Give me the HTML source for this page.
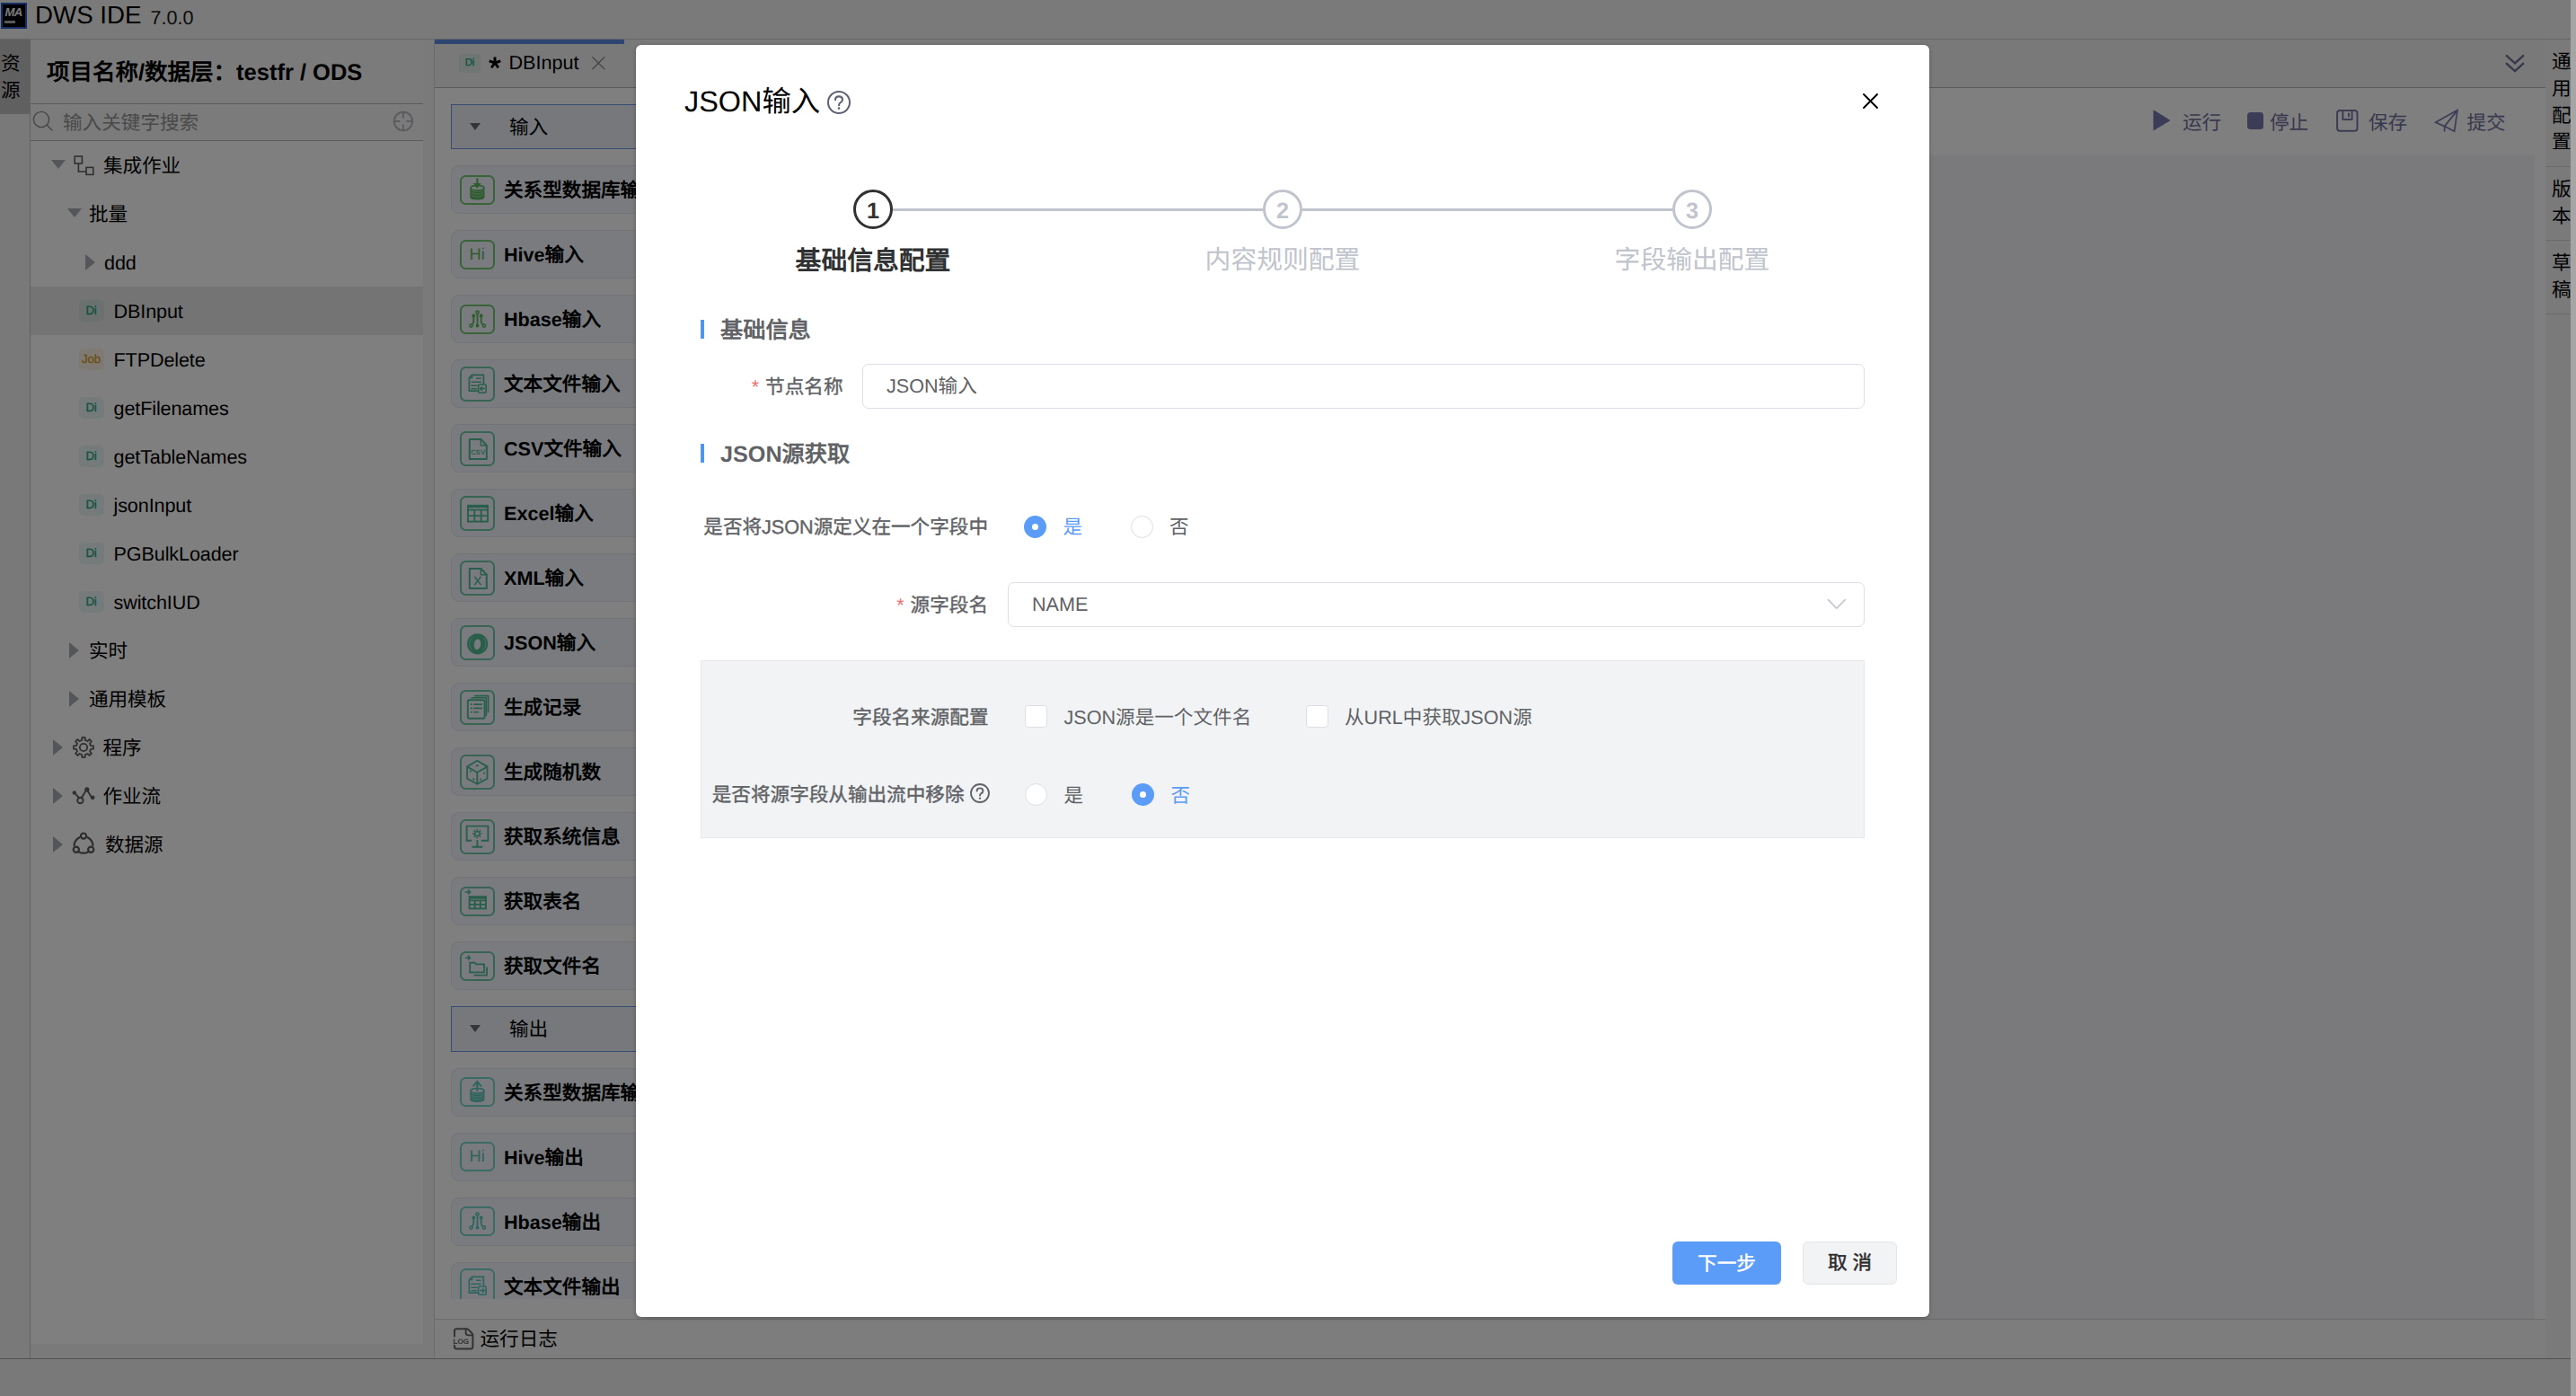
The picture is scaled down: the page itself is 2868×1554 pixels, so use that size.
<!DOCTYPE html>
<html lang="zh-CN">
<head>
<meta charset="utf-8">
<title>DWS IDE</title>
<style>
*{box-sizing:border-box;margin:0;padding:0}
html,body{width:2868px;height:1554px;overflow:hidden;background:#fff}
body{font-family:"Liberation Sans",sans-serif;font-size:21.6px;color:#000;position:relative;text-rendering:geometricPrecision}
svg{display:block;overflow:visible}
#app{position:absolute;left:0;top:0;width:2868px;height:1554px;background:#fff;overflow:hidden}
#hdr{position:absolute;left:0;top:0;width:2868px;height:44px;background:#f4f4f4;border-bottom:1.5px solid #cfcfcf}
#logo{position:absolute;left:1px;top:3px;width:29px;height:29px;background:#020206;border:2.5px solid #2c58c8;overflow:hidden}
#logo b{position:absolute;left:2.5px;top:2.2px;font-size:13.2px;line-height:13.2px;color:#f4f4f4;letter-spacing:-.8px;font-style:italic}
#logo i{position:absolute;left:1.5px;top:17.5px;width:12.5px;height:3px;background:#b0b0aa}
#hdr .t1{position:absolute;left:39px;top:0;font-size:27.7px;line-height:33px;white-space:nowrap}
#hdr .t2{position:absolute;left:167.5px;top:8px;font-size:21.6px;line-height:24px;color:#1a1a1a}
#lstrip{position:absolute;left:0;top:44px;width:34px;height:1469px;background:#f3f3f3}
#lstrip .act{position:absolute;left:0;top:0;width:34px;height:83px;background:#c1c1c1;font-size:21.6px;line-height:30px;text-align:left;padding:12.3px 0 0 1px}
#side{position:absolute;left:33px;top:44px;width:439px;height:1469px;background:#fff;border-left:1.5px solid #c4c4c4;border-right:1.5px solid #f4f4f4}
#side .hd{position:absolute;left:0;top:0;width:437px;height:113px;background:#f6f6f6}
#side .ttl{position:absolute;left:18px;top:0;height:72px;line-height:75px;font-size:25.5px;font-weight:bold;white-space:nowrap}
#side .srch{position:absolute;left:0;top:71px;width:437px;height:42px;border-top:1.5px solid #b6b6b6;border-bottom:1.5px solid #b6b6b6}
#side .srch .ph{position:absolute;left:36px;top:0;line-height:41px;color:#949494;font-size:21.6px}
#side .srch svg{position:absolute}
#side .foot{position:absolute;left:0;top:1452px;width:437px;height:17px;background:#f4f4f4}
.row{position:absolute;left:0;width:437px;height:54px;line-height:56px;white-space:nowrap;font-size:21.6px;letter-spacing:-.12px}
.row.sel{background:#e9e9e9}
.row .tx{position:absolute;top:0}
.row svg{position:absolute}
.bdg{position:absolute;width:28px;height:24px;border-radius:5px;font-size:13.3px;line-height:24px;text-align:center;letter-spacing:-.2px;-webkit-text-stroke:.3px currentColor}
.bdg.di{background:rgba(23,165,124,.085);color:#17a57c}
.bdg.job{background:rgba(222,150,20,.1);color:#d79a1e}
.car{position:absolute;width:0;height:0}
.car.d{border-left:8px solid transparent;border-right:8px solid transparent;border-top:10px solid #a9acb2}
.car.r{border-top:9px solid transparent;border-bottom:9px solid transparent;border-left:11px solid #a9acb2}
#gap{position:absolute;left:471px;top:44px;width:13px;height:1469px;background:#f4f4f4}
#main{position:absolute;left:483px;top:44px;width:2351px;height:1469px;background:#fff;border-left:1.5px solid #d6d6d6}
#tabs{position:absolute;left:0;top:0;width:2351px;height:54px;border-bottom:1.5px solid #b8b8b8;background:#f3f3f3}
#tab1{position:absolute;left:0;top:0;width:211px;height:53px;border-top:5px solid #5a8ce2;font-size:21.6px;line-height:42.5px;white-space:nowrap}
#tab1 .bdg{left:27px;top:11px;width:24px;height:20.5px;font-size:11.5px;line-height:20.5px;border-radius:4px}
#tab1 .tx{position:absolute;left:82.5px;top:0}
#tab1 .st{position:absolute;left:60px;top:13.6px}
#tab1 svg.x{position:absolute;left:175px;top:13.5px}
#chev{position:absolute;left:2303.5px;top:15px}
#pal{position:absolute;left:0;top:54px;width:236px;height:1348px;overflow:hidden;background:#fff}
.grp{position:absolute;left:18px;width:300px;height:50.4px;border:1.3px solid #6a98e6;background:#edf1f8;line-height:49.5px;font-size:21.6px}
.grp .car{left:20px;top:19.5px;border-left:6.5px solid transparent;border-right:6.5px solid transparent;border-top:8px solid #6b6b6b}
.grp span{position:absolute;left:64px}
.card{position:absolute;left:18px;width:300px;height:54px;border:1.5px solid #e3e8f0;border-radius:9px;background:#f2f6fc;font-weight:bold;font-size:21.6px;line-height:54px;white-space:nowrap}
.card .lb{position:absolute;left:58px;top:0}
.ic{position:absolute;left:8.5px;width:39.4px;border:2px solid;border-radius:6.5px}
.ic.s{top:9.8px;height:33px}
.ic.b{top:6.6px;height:39.4px}
.ic.g{border-color:#74c674;color:#5cb85c}
.ic.t{border-color:#70c8a9;color:#52bd95}
.ic.c{border-color:#78d5c9;color:#5cc8bb}
.ic svg{position:absolute;left:-2px;top:-2px}
.ic .hi{position:absolute;left:0;top:0;width:100%;height:100%;text-align:center;font-weight:normal;font-size:18.2px;line-height:29.5px}
#tool{position:absolute;left:236px;top:54px;width:2102px;height:74px;background:#fff}
#canvas{position:absolute;left:236px;top:128px;width:2102px;height:1296px;background:#f5f5f8}
#tool .b{position:absolute;top:0;line-height:77px;font-size:21.6px;color:#71719d;white-space:nowrap}
#tool svg{position:absolute}
#log{position:absolute;left:0;top:1424px;width:2351px;height:45px;border-top:1.5px solid #d6d6d6;background:#fafafa;line-height:44px;font-size:21.6px}
#log span{position:absolute;left:50.5px;top:0}
#log svg{position:absolute;left:19.5px;top:7.5px}
#rstrip{position:absolute;left:2834px;top:44px;width:28px;height:1469px;background:#f5f5f5;font-size:21.6px;line-height:29.65px}
#rstrip div{width:30px;padding:10.4px 0 11.5px 7px;border-bottom:1.5px solid #d6d6d6;word-break:break-all;overflow:hidden}
#status{position:absolute;left:0;top:1512.4px;width:2868px;height:42px;background:#f3f3f3;border-top:1.6px solid #a2a2a2}
#mask{position:absolute;left:0;top:0;width:2868px;height:1554px;background:rgba(0,0,0,.5)}
#redge{position:absolute;left:2862px;top:0;width:6px;height:1554px;background:#a5a5a5}
#modal{position:absolute;left:708px;top:50px;width:1440px;height:1416px;background:#fff;border-radius:6px;box-shadow:0 1px 4px rgba(0,0,0,.3);color:#606266;font-size:21.6px}
#modal .a{position:absolute;white-space:nowrap}
#modal svg{position:absolute}
.mt{left:54px;top:41px;font-size:32.4px;line-height:44px;color:#000}
.stp{position:absolute;top:161px;width:44px;height:44px;border-radius:50%;border:3.6px solid #c0c4cc;color:#c0c4cc;font-weight:bold;font-size:25.2px;line-height:42px;text-align:center;background:#fff}
.stp.on{border-color:#303133;color:#303133}
.sln{position:absolute;top:181.5px;height:3.6px;background:#c0c4cc}
.stt{position:absolute;top:220px;width:300px;text-align:center;font-size:28.8px;line-height:40px;color:#c0c4cc}
.stt.on{color:#303133;font-weight:bold;top:221px}
.sec{position:absolute;left:72px;height:21px;border-left:4px solid #4d97f3;}
.sec span{position:absolute;left:18px;top:-8px;line-height:40px;font-size:25.2px;font-weight:bold;color:#606266;white-space:nowrap}
.lab{position:absolute;text-align:right;white-space:nowrap;line-height:51px;color:#606266;font-size:21.6px;font-weight:500;-webkit-text-stroke:.4px #606266}
.lab i{font-style:normal;color:#f56c6c;margin-right:7px;-webkit-text-stroke:0}
.inp{position:absolute;height:50px;border:1.8px solid #dcdfe6;border-radius:7px;line-height:47px;padding-left:26px;color:#606266;background:#fff}
.rad{position:absolute;width:25px;height:25px;border-radius:50%;border:1.8px solid #dcdfe6;background:#fff}
.rad.on{border:none;background:#5a9cf8}
.rad.on:after{content:"";position:absolute;left:9px;top:9px;width:7px;height:7px;border-radius:50%;background:#fff}
.chk{position:absolute;width:25px;height:25px;border-radius:3.6px;border:1.8px solid #dcdfe6;background:#fff}
.opt{position:absolute;white-space:nowrap;line-height:31px;color:#606266;font-size:21.6px}
.opt.on{color:#5a9cf8}
.pan{position:absolute;left:72px;top:685px;width:1296px;height:198px;background:#f2f3f5;border:1.5px solid #e6e8ec}
.btn{position:absolute;top:1332px;height:48px;border-radius:6px;line-height:49px;text-align:center;font-size:21.6px;font-weight:500;-webkit-text-stroke:.5px currentColor}
.btn.p{left:1154px;width:121px;background:#5a9cf8;color:#fff}
.btn.d{left:1299px;width:105px;background:#f2f3f5;border:1.5px solid #e4e6ea;color:#2b2b2b;line-height:46px}
</style>
</head>
<body>
<div id="app">
<div id="hdr"><div id="logo"><b>MA</b><i></i></div><div class="t1">DWS IDE</div><div class="t2">7.0.0</div></div>
<div id="lstrip"><div class="act">资<br>源</div></div>
<div id="side">
<div class="hd"></div><div class="ttl">项目名称/数据层：testfr / ODS</div>
<div class="srch"><svg width="24" height="24" viewBox="0 0 24 24" fill="none" stroke="#8c8c8c" stroke-width="1.4" stroke-linecap="round" stroke-linejoin="round" style="left:2.4px;top:6.8px"><circle cx="10" cy="10" r="8.6"/><path d="M16.3 16.3l5.6 5.6"/></svg><div class="ph">输入关键字搜索</div><svg width="24" height="24" viewBox="0 0 24 24" fill="none" stroke="#b4b8be" stroke-width="1.9" stroke-linecap="round" stroke-linejoin="round" style="left:403px;top:7px"><circle cx="12" cy="12" r="10.2"/><path d="M12 1.8v6M12 16.2v6M1.8 12h6M16.2 12h6"/></svg></div>
<div class="row" style="top:113px"><i class="car d" style="left:22.5px;top:20.5px"></i><svg width="24" height="24" viewBox="0 0 24 24" fill="none" stroke="#5f5f5f" stroke-width="1.6" stroke-linecap="round" stroke-linejoin="round" style="left:47.5px;top:15.599999999999994px"><rect x="1.2" y="1" width="8.2" height="8" stroke-linejoin="miter"/><rect x="14" y="13.4" width="7.8" height="8" stroke-linejoin="miter"/><path d="M5.4 9v9h8.6" stroke-linejoin="miter" stroke-linecap="butt"/></svg><span class="tx" style="left:81.0px">集成作业</span></div>
<div class="row" style="top:167px"><i class="car d" style="left:40.5px;top:20.5px"></i><span class="tx" style="left:65.0px">批量</span></div>
<div class="row" style="top:221px"><i class="car r" style="left:61.0px;top:18px"></i><span class="tx" style="left:82.0px">ddd</span></div>
<div class="row sel" style="top:275px"><span class="bdg di" style="left:53.5px;top:14.8px">Di</span><span class="tx" style="left:92.5px">DBInput</span></div>
<div class="row" style="top:329px"><span class="bdg job" style="left:53.5px;top:14.8px">Job</span><span class="tx" style="left:92.5px">FTPDelete</span></div>
<div class="row" style="top:383px"><span class="bdg di" style="left:53.5px;top:14.8px">Di</span><span class="tx" style="left:92.5px">getFilenames</span></div>
<div class="row" style="top:437px"><span class="bdg di" style="left:53.5px;top:14.8px">Di</span><span class="tx" style="left:92.5px">getTableNames</span></div>
<div class="row" style="top:491px"><span class="bdg di" style="left:53.5px;top:14.8px">Di</span><span class="tx" style="left:92.5px">jsonInput</span></div>
<div class="row" style="top:545px"><span class="bdg di" style="left:53.5px;top:14.8px">Di</span><span class="tx" style="left:92.5px">PGBulkLoader</span></div>
<div class="row" style="top:599px"><span class="bdg di" style="left:53.5px;top:14.8px">Di</span><span class="tx" style="left:92.5px">switchIUD</span></div>
<div class="row" style="top:653px"><i class="car r" style="left:43.0px;top:18px"></i><span class="tx" style="left:65.0px">实时</span></div>
<div class="row" style="top:707px"><i class="car r" style="left:43.0px;top:18px"></i><span class="tx" style="left:65.0px">通用模板</span></div>
<div class="row" style="top:761px"><i class="car r" style="left:25.0px;top:18px"></i><svg width="26" height="26" viewBox="0 0 26 26" fill="none" stroke="#5f5f5f" stroke-width="1.8" stroke-linecap="round" stroke-linejoin="round" style="left:45.5px;top:13.5px"><circle cx="13" cy="13" r="4.2"/><path d="M21.10 11.19L24.09 11.42L24.09 14.58L21.10 14.81L20.01 17.45L21.96 19.72L19.72 21.96L17.45 20.01L14.81 21.10L14.58 24.09L11.42 24.09L11.19 21.10L8.55 20.01L6.28 21.96L4.04 19.72L5.99 17.45L4.90 14.81L1.91 14.58L1.91 11.42L4.90 11.19L5.99 8.55L4.04 6.28L6.28 4.04L8.55 5.99L11.19 4.90L11.42 1.91L14.58 1.91L14.81 4.90L17.45 5.99L19.72 4.04L21.96 6.28L20.01 8.55Z"/></svg><span class="tx" style="left:80.5px">程序</span></div>
<div class="row" style="top:815px"><i class="car r" style="left:25.0px;top:18px"></i><svg width="26" height="20" viewBox="0 0 26 20" fill="none" stroke="#5f5f5f" stroke-width="1.9" stroke-linecap="round" stroke-linejoin="round" style="left:45.5px;top:17px"><path d="M3 6.4l5 6M10.6 12.6L16 3.6M17.6 4.6l5 8.2" stroke-width="1.9"/><circle cx="2.8" cy="6.4" r="2.2" fill="#5f5f5f" stroke="none"/><circle cx="9.4" cy="15" r="3.2" stroke-width="1.9"/><circle cx="16.8" cy="2.8" r="2.6" fill="#5f5f5f" stroke="none"/><circle cx="23.2" cy="11.8" r="2.3" fill="#5f5f5f" stroke="none"/></svg><span class="tx" style="left:80.5px">作业流</span></div>
<div class="row" style="top:869px"><i class="car r" style="left:25.0px;top:18px"></i><svg width="26" height="26" viewBox="0 0 26 26" fill="none" stroke="#5a5a5a" stroke-width="2.2" stroke-linecap="round" stroke-linejoin="round" style="left:45.900000000000006px;top:13px"><path d="M8.4 6.2A10.6 10.6 0 0 0 2.6 15M17.6 6.2A10.6 10.6 0 0 1 23.4 15M8 22.4a10.8 10.8 0 0 0 10 0" /><circle cx="13" cy="4.6" r="3.1"/><circle cx="4.8" cy="19.8" r="3.1"/><circle cx="21.2" cy="19.8" r="3.1"/></svg><span class="tx" style="left:83.0px">数据源</span></div>
<div class="foot"></div>
</div>
<div id="gap"></div>
<div id="main">
<div id="tabs"><div id="tab1"><span class="bdg di">Di</span><svg class="st" width="14" height="14" viewBox="0 0 14 14" stroke="#000" stroke-width="2.9" stroke-linecap="butt"><path d="M7 7V0.4M7 7L0.7 4.95M7 7l6.3-2.05M7 7l-3.9 5.35M7 7l3.9 5.35"/></svg><span class="tx">DBInput</span><svg class="x" width="15" height="15" viewBox="0 0 15 15" fill="none" stroke="#8c8c8c" stroke-width="1.3" stroke-linecap="round" stroke-linejoin="round" style=""><path d="M.8 .8l13 13M13.8 .8L.8 13.8"/></svg></div><div id="chev"><svg width="24" height="24" viewBox="0 0 24 24" fill="none" stroke="#6f6f96" stroke-width="2.3" stroke-linecap="round" stroke-linejoin="round" style=""><path d="M2 2.4l10 9 10-9M2 11.2l10 9 10-9" stroke-linejoin="miter" stroke-linecap="butt"/></svg></div></div>
<div id="pal">
<div class="grp" style="top:18px"><i class="car"></i><span>输入</span></div>
<div class="card" style="top:86px"><div class="ic s g"><svg width="39" height="33" viewBox="0 0 39 33" fill="none" stroke="currentColor" stroke-width="1.8" stroke-linecap="round" stroke-linejoin="round" ><path d="M11.95 14.3V24.3a7.45 2.7 0 0 0 14.9 0V14.3a7.45 2.7 0 0 1 -14.9 0z" fill="currentColor" stroke="currentColor" stroke-width="1.2"/><ellipse cx="19.4" cy="14.3" rx="7.45" ry="2.7" stroke-width="1.5" fill="none"/><path d="M13.149999999999999 16.00a6.25 2.2 0 0 0 12.5 0" stroke="#dfe9e3" stroke-width="1" opacity=".62" fill="none"/><path d="M13.149999999999999 18.93a6.25 2.2 0 0 0 12.5 0" stroke="#dfe9e3" stroke-width="1" opacity=".62" fill="none"/><path d="M13.149999999999999 21.87a6.25 2.2 0 0 0 12.5 0" stroke="#dfe9e3" stroke-width="1" opacity=".62" fill="none"/><path d="M19.4 4.2v6" stroke-width="1.9"/><path d="M15.9 9.4h7l-3.5 4.6z" fill="currentColor" stroke-width="1"/></svg></div><span class="lb">关系型数据库输入</span></div>
<div class="card" style="top:158px"><div class="ic s g"><div class="hi">Hi</div></div><span class="lb">Hive输入</span></div>
<div class="card" style="top:230px"><div class="ic s g"><svg width="39" height="33" viewBox="0 0 39 33" fill="none" stroke="currentColor" stroke-width="1.8" stroke-linecap="round" stroke-linejoin="round" ><circle cx="19.5" cy="8.6" r="1.7" stroke-width="1.5"/><path d="M19.5 10.4v12" stroke-width="1.8"/><circle cx="19.5" cy="23.6" r="1.9" fill="currentColor" stroke="none"/><circle cx="15.3" cy="12.5" r="1.9" fill="currentColor" stroke="none"/><path d="M15.3 13.5v5.6q0 1.3-.9 2.1l-.9 .9" stroke-width="1.8"/><circle cx="12.5" cy="23.6" r="1.6" stroke-width="1.5"/><circle cx="23.7" cy="12.5" r="1.9" fill="currentColor" stroke="none"/><path d="M23.7 13.5v5.6q0 1.3.9 2.1l.9 .9" stroke-width="1.8"/><circle cx="26.9" cy="23.6" r="1.6" stroke-width="1.5"/></svg></div><span class="lb">Hbase输入</span></div>
<div class="card" style="top:302px"><div class="ic b t"><svg width="39" height="39" viewBox="0 0 39 39" fill="none" stroke="currentColor" stroke-width="1.8" stroke-linecap="round" stroke-linejoin="round" ><path d="M20.5 27.2H10.4V12.6l3.2-3.2h12.8v10.2" stroke-width="1.7"/><path d="M10.6 12.7h3.1V9.6" stroke-width="1.3"/><path d="M18.6 13.3h4.6M13 17.3h10.4M13 21.2h6M13 24.8h5.4" stroke-width="1.5"/><rect x="20.6" y="20" width="8.6" height="9.2" rx="1.4" stroke-width="1.6"/><path d="M27.3 24.6h-4.4M24.6 22.7l-1.9 1.9 1.9 1.9" stroke-width="1.5"/></svg></div><span class="lb">文本文件输入</span></div>
<div class="card" style="top:374px"><div class="ic b t"><svg width="39" height="39" viewBox="0 0 39 39" fill="none" stroke="currentColor" stroke-width="1.8" stroke-linecap="round" stroke-linejoin="round" ><path d="M10.8 9h12.6l6.4 6.6V31H10.8z" stroke-width="2"/><path d="M23.2 9.2v6.6h6.4" stroke-width="1.4"/><text x="20.3" y="25.6" font-family="Liberation Sans, sans-serif" font-size="7.6" text-anchor="middle" fill="currentColor" stroke="none" letter-spacing=".2">CSV</text></svg></div><span class="lb">CSV文件输入</span></div>
<div class="card" style="top:446px"><div class="ic b t"><svg width="39" height="39" viewBox="0 0 39 39" fill="none" stroke="currentColor" stroke-width="1.8" stroke-linecap="round" stroke-linejoin="round" ><rect x="9" y="10.8" width="22" height="17.8" stroke-width="1.9" stroke-linejoin="miter"/><path d="M9 15.600000000000001H31M9 22.10H31M16.33 15.600000000000001V28.6M23.67 15.600000000000001V28.6" stroke-width="1.9" stroke-linecap="butt"/><path d="M9 12.0H31" stroke-width="2.6" stroke-linecap="butt"/></svg></div><span class="lb">Excel输入</span></div>
<div class="card" style="top:518px"><div class="ic b t"><svg width="39" height="39" viewBox="0 0 39 39" fill="none" stroke="currentColor" stroke-width="1.8" stroke-linecap="round" stroke-linejoin="round" ><path d="M10.8 9h12.6l6.4 6.6V31H10.8z" stroke-width="2"/><path d="M23.2 9.2v6.6h6.4" stroke-width="1.4"/><path d="M16.6 18.2l6.6 8.6M23.2 18.2l-6.6 8.6" stroke-width="1.4"/></svg></div><span class="lb">XML输入</span></div>
<div class="card" style="top:590px"><div class="ic b t"><svg width="39" height="39" viewBox="0 0 39 39" fill="none" stroke="currentColor" stroke-width="1.8" stroke-linecap="round" stroke-linejoin="round" ><circle cx="19.6" cy="20.8" r="11.6" fill="currentColor" stroke="none"/><ellipse cx="19.5" cy="21.3" rx="3.7" ry="5.9" transform="rotate(8 19.5 21.3)" fill="#f2f6fc" stroke="none"/><path d="M12.6 26.5a9.6 9.6 0 0 1 1.2-13.2" stroke="#e6ecf3" stroke-width=".9" opacity=".55"/><path d="M27 14.4a9.6 9.6 0 0 1-1.2 13.3" stroke="#e6ecf3" stroke-width=".9" opacity=".55"/></svg></div><span class="lb">JSON输入</span></div>
<div class="card" style="top:662px"><div class="ic b t"><svg width="39" height="39" viewBox="0 0 39 39" fill="none" stroke="currentColor" stroke-width="1.8" stroke-linecap="round" stroke-linejoin="round" ><rect x="8.8" y="11.2" width="18.8" height="20.6" rx="1.8" stroke-width="1.9"/><path d="M13 8.8h16.4v19.6M16.6 6.6h15v18.2" stroke-width="1.6"/><path d="M15.8 16.1h8.6M15.8 20.4h8.6M15.8 24.7h4.6" stroke-width="1.6"/><path d="M12.4 16.1h.8M12.4 20.4h.8M12.4 24.7h.8" stroke-width="1.6"/></svg></div><span class="lb">生成记录</span></div>
<div class="card" style="top:734px"><div class="ic b t"><svg width="39" height="39" viewBox="0 0 39 39" fill="none" stroke="currentColor" stroke-width="1.8" stroke-linecap="round" stroke-linejoin="round" ><path d="M19.3 6.8l11.2 6.6v13.4l-11.2 6-11.2-6V13.4z" stroke-width="1.8"/><path d="M8.3 13.6l11 6.2 11-6.2M19.3 19.8v12.8" stroke-width="1.8"/><ellipse cx="19.3" cy="12.3" rx="1.7" ry="1.1" fill="currentColor" stroke="none"/><circle cx="11.9" cy="18.6" r="1.1" fill="currentColor" stroke="none"/><circle cx="15.3" cy="27.4" r="1.1" fill="currentColor" stroke="none"/><circle cx="27" cy="20.6" r="1.1" fill="currentColor" stroke="none"/><circle cx="23.2" cy="27.6" r="1.1" fill="currentColor" stroke="none"/></svg></div><span class="lb">生成随机数</span></div>
<div class="card" style="top:806px"><div class="ic b t"><svg width="39" height="39" viewBox="0 0 39 39" fill="none" stroke="currentColor" stroke-width="1.8" stroke-linecap="round" stroke-linejoin="round" ><path d="M13.2 23.8H7.6V7.6h23.8v16.2h-7.6" stroke-width="1.9" stroke-linejoin="miter" stroke-linecap="butt"/><path d="M19.4 23v7.8M13.6 30.8h11.6" stroke-width="1.9" stroke-linecap="butt"/><circle cx="19.3" cy="16" r="2.6" stroke-width="1.5"/><path d="M22.70 16.00L24.60 16.00M21.70 18.40L23.05 19.75M19.30 19.40L19.30 21.30M16.90 18.40L15.55 19.75M15.90 16.00L14.00 16.00M16.90 13.60L15.55 12.25M19.30 12.60L19.30 10.70M21.70 13.60L23.05 12.25" stroke-width="1.5" stroke-linecap="butt"/></svg></div><span class="lb">获取系统信息</span></div>
<div class="card" style="top:878px"><div class="ic s t"><svg width="39" height="33" viewBox="0 0 39 33" fill="none" stroke="currentColor" stroke-width="1.8" stroke-linecap="round" stroke-linejoin="round" ><rect x="10.6" y="11.2" width="18.4" height="13.2" stroke-width="1.9" stroke-linejoin="miter"/><path d="M10.6 15.399999999999999H29M10.6 19.90H29M16.73 15.399999999999999V24.4M22.87 15.399999999999999V24.4" stroke-width="1.9" stroke-linecap="butt"/><path d="M10.6 12.399999999999999H29" stroke-width="2.6" stroke-linecap="butt"/><path d="M6.4 6h5M9.4 3.9l2.2 2.1-2.2 2.1" stroke-width="1.5"/></svg></div><span class="lb">获取表名</span></div>
<div class="card" style="top:950px"><div class="ic s t"><svg width="39" height="33" viewBox="0 0 39 33" fill="none" stroke="currentColor" stroke-width="1.8" stroke-linecap="round" stroke-linejoin="round" ><path d="M6.4 7.2h5M9.4 5.1l2.2 2.1-2.2 2.1" stroke-width="1.5"/><path d="M11.2 23.4V12.6h5.4l1.4 1.7h9v9.1z" stroke-width="1.8" stroke-linejoin="miter"/><path d="M30 17.4v9.2H15.4" stroke-width="1.8" stroke-linejoin="miter" stroke-linecap="butt"/></svg></div><span class="lb">获取文件名</span></div>
<div class="grp" style="top:1022.3px"><i class="car"></i><span>输出</span></div>
<div class="card" style="top:1090.6px"><div class="ic s c"><svg width="39" height="33" viewBox="0 0 39 33" fill="none" stroke="currentColor" stroke-width="1.8" stroke-linecap="round" stroke-linejoin="round" ><path d="M11.95 15.3V24.7a7.45 2.7 0 0 0 14.9 0V15.3a7.45 2.7 0 0 1 -14.9 0z" fill="currentColor" stroke="currentColor" stroke-width="1.2"/><ellipse cx="19.4" cy="15.3" rx="7.45" ry="2.7" stroke-width="1.5" fill="none"/><path d="M13.149999999999999 17.00a6.25 2.2 0 0 0 12.5 0" stroke="#dfe9e3" stroke-width="1" opacity=".62" fill="none"/><path d="M13.149999999999999 19.73a6.25 2.2 0 0 0 12.5 0" stroke="#dfe9e3" stroke-width="1" opacity=".62" fill="none"/><path d="M13.149999999999999 22.47a6.25 2.2 0 0 0 12.5 0" stroke="#dfe9e3" stroke-width="1" opacity=".62" fill="none"/><path d="M19.3 15V6" stroke-width="2.1"/><path d="M15.3 9.6l4-4.6 4 4.6" stroke-width="2.1" stroke-linejoin="miter"/></svg></div><span class="lb">关系型数据库输出</span></div>
<div class="card" style="top:1162.6px"><div class="ic s c"><div class="hi">Hi</div></div><span class="lb">Hive输出</span></div>
<div class="card" style="top:1234.6px"><div class="ic s c"><svg width="39" height="33" viewBox="0 0 39 33" fill="none" stroke="currentColor" stroke-width="1.8" stroke-linecap="round" stroke-linejoin="round" ><circle cx="19.5" cy="8.6" r="1.7" stroke-width="1.5"/><path d="M19.5 10.4v12" stroke-width="1.8"/><circle cx="19.5" cy="23.6" r="1.9" fill="currentColor" stroke="none"/><circle cx="15.3" cy="12.5" r="1.9" fill="currentColor" stroke="none"/><path d="M15.3 13.5v5.6q0 1.3-.9 2.1l-.9 .9" stroke-width="1.8"/><circle cx="12.5" cy="23.6" r="1.6" stroke-width="1.5"/><circle cx="23.7" cy="12.5" r="1.9" fill="currentColor" stroke="none"/><path d="M23.7 13.5v5.6q0 1.3.9 2.1l.9 .9" stroke-width="1.8"/><circle cx="26.9" cy="23.6" r="1.6" stroke-width="1.5"/></svg></div><span class="lb">Hbase输出</span></div>
<div class="card" style="top:1306.6px"><div class="ic b c"><svg width="39" height="39" viewBox="0 0 39 39" fill="none" stroke="currentColor" stroke-width="1.8" stroke-linecap="round" stroke-linejoin="round" ><path d="M20.5 27.2H10.4V12.6l3.2-3.2h12.8v10.2" stroke-width="1.7"/><path d="M10.6 12.7h3.1V9.6" stroke-width="1.3"/><path d="M18.6 13.3h4.6M13 17.3h10.4M13 21.2h6M13 24.8h5.4" stroke-width="1.5"/><rect x="20.6" y="20" width="8.6" height="9.2" rx="1.4" stroke-width="1.6"/><path d="M22.6 24.6h4.4M25.3 22.7l1.9 1.9-1.9 1.9" stroke-width="1.5"/></svg></div><span class="lb">文本文件输出</span></div>
</div>
<div id="tool"><svg width="20" height="24" viewBox="0 0 20 24" fill="none" stroke="#7878ae" stroke-width="1.2" stroke-linecap="round" stroke-linejoin="round" style="left:1677.0px;top:24.400000000000006px"><path d="M1 1.2v21.4l17.4-10.7z" fill="#7878ae" stroke="#7878ae" stroke-width="1.2"/></svg><div class="b" style="left:1710.0px">运行</div><div style="position:absolute;left:1781.5px;top:27px;width:18.5px;height:19px;border-radius:3.5px;background:#7878ae"></div><div class="b" style="left:1807.0px">停止</div><svg width="25" height="25" viewBox="0 0 25 25" fill="none" stroke="#7878ae" stroke-width="2" stroke-linecap="round" stroke-linejoin="round" style="left:1880.6999999999998px;top:23.599999999999994px"><rect x="1.1" y="1.1" width="22.4" height="22.6" rx="3"/><path d="M7.4 1.4v9.6h10.2V1.4M14 4.4v3.2"/></svg><div class="b" style="left:1917.0px">保存</div><svg width="28" height="27" viewBox="0 0 28 27" fill="none" stroke="#7878ae" stroke-width="1.7" stroke-linecap="round" stroke-linejoin="round" style="left:1989.5px;top:22.599999999999994px"><path d="M1.6 15.2L26 1.6 22.6 25.2 11.6 19.6z M26 1.6L11.6 19.6v5.2" stroke-linejoin="miter"/></svg><div class="b" style="left:2026.5px">提交</div></div>
<div id="canvas"></div>
<div id="log"><svg width="24" height="26" viewBox="0 0 24 26" fill="none" stroke="#646464" stroke-width="2" stroke-linecap="round" stroke-linejoin="round" style=""><path d="M2 10.6V4.6Q2 2.2 4.6 2.2H14.8Q16.6 2.2 17.8 3.4L21.2 6.8Q22.4 8 22.4 9.8V22Q22.4 24.6 19.8 24.6H4.6Q2 24.6 2 22V20.8"/><path d="M14.6 2.6V6.6Q14.6 9.4 17.4 9.4H22" stroke-width="1.8"/><text x="0.6" y="18.7" font-family="Liberation Sans, sans-serif" font-weight="bold" font-size="8" fill="#606060" stroke="none">LOG</text></svg><span>运行日志</span></div>
</div>
<div id="rstrip"><div>通用配置</div><div>版本</div><div>草稿</div></div>
<div id="status"></div>
</div>
<div id="mask"></div>
<div id="redge"></div>
<div id="modal">
<div class="a mt">JSON输入</div>
<svg width="28" height="28" viewBox="0 0 28 28" fill="none" stroke="#5d6274" stroke-width="2" stroke-linecap="round" stroke-linejoin="round" style="left:212px;top:49.8px"><circle cx="14" cy="14" r="12"/><path d="M10 11.2q0-3.8 4-3.8t4 3.6q0 2-2.2 3.2-1.8 1-1.8 3" stroke-width="2.1"/><circle cx="14" cy="20.6" r="1.3" fill="#5d6274" stroke="none"/></svg>
<svg width="17" height="17" viewBox="0 0 17 17" fill="none" stroke="#000" stroke-width="1.9" stroke-linecap="round" stroke-linejoin="round" style="left:1365.5px;top:54.2px"><path d="M1 1l15 15M16 1L1 16"/></svg>
<div class="sln" style="left:286px;width:412px"></div>
<div class="sln" style="left:742px;width:412px"></div>
<div class="stp on" style="left:242px">1</div>
<div class="stt on" style="left:114px">基础信息配置</div>
<div class="stp" style="left:698px">2</div>
<div class="stt" style="left:570px">内容规则配置</div>
<div class="stp" style="left:1154px">3</div>
<div class="stt" style="left:1026px">字段输出配置</div>
<div class="sec" style="top:306px"><span>基础信息</span></div>
<div class="sec" style="top:443.5px"><span>JSON源获取</span></div>
<div class="lab" style="left:-8px;width:238.5px;top:355px"><i>*</i>节点名称</div>
<div class="inp" style="left:252px;top:355px;width:1116px">JSON输入</div>
<div class="lab" style="left:-8px;width:400px;top:511px">是否将JSON源定义在一个字段中</div>
<div class="rad on" style="left:432px;top:523.7px"></div>
<div class="a opt on" style="left:475.5px;top:521px;">是</div>
<div class="rad" style="left:551px;top:523.7px"></div>
<div class="a opt" style="left:594px;top:521px;">否</div>
<div class="lab" style="left:-8px;width:400px;top:598px"><i>*</i>源字段名</div>
<div class="inp" style="left:414px;top:598px;width:954px">NAME</div>
<svg width="22" height="14" viewBox="0 0 22 14" fill="none" stroke="#c0c4cc" stroke-width="1.6" stroke-linecap="round" stroke-linejoin="round" style="left:1326px;top:615.6px"><path d="M1.4 1.6l9.4 9.6 9.4-9.6"/></svg>
<div class="pan"></div>
<div class="lab" style="left:-8px;width:400.5px;top:723px">字段名来源配置</div>
<div class="chk" style="left:433px;top:734.8px"></div>
<div class="a opt" style="left:476.5px;top:732.5px;">JSON源是一个文件名</div>
<div class="chk" style="left:746px;top:734.8px"></div>
<div class="a opt" style="left:789px;top:732.5px;">从URL中获取JSON源</div>
<div class="lab" style="left:-8px;width:373.5px;top:809px">是否将源字段从输出流中移除</div>
<svg width="24" height="24" viewBox="0 0 24 24" fill="none" stroke="#606266" stroke-width="1.8" stroke-linecap="round" stroke-linejoin="round" style="left:370.70000000000005px;top:821px"><circle cx="12" cy="12" r="10"/><path d="M8.6 9.6q0-3.2 3.4-3.2t3.4 3q0 1.7-1.9 2.7-1.5.9-1.5 2.5" stroke-width="1.9"/><circle cx="12" cy="17.6" r="1.2" fill="#606266" stroke="none"/></svg>
<div class="rad" style="left:433px;top:821.7px"></div>
<div class="a opt" style="left:476.5px;top:819.5px;">是</div>
<div class="rad on" style="left:552px;top:821.7px"></div>
<div class="a opt on" style="left:595.5px;top:819.5px;">否</div>
<div class="btn p">下一步</div><div class="btn d">取 消</div>
</div>
</body>
</html>
